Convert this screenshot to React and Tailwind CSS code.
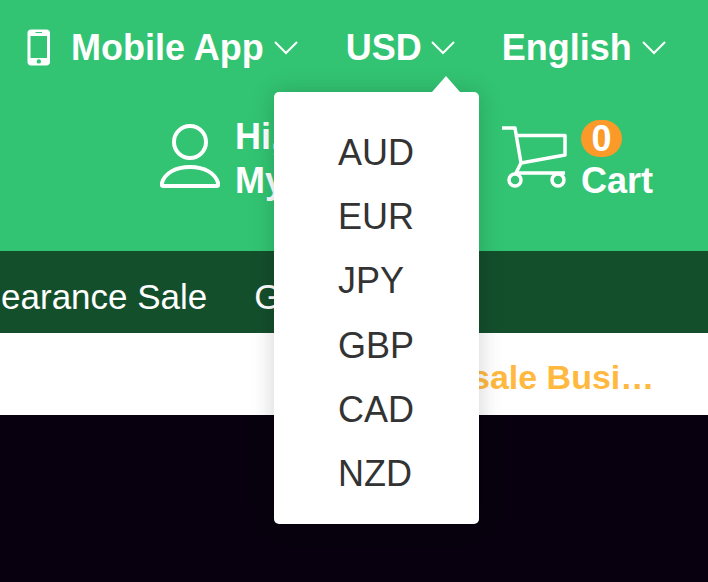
const currencies = ['AUD', 'EUR', 'JPY', 'GBP', 'CAD', 'NZD']

function Chevron() {
  return (
    <svg width="24" height="15" viewBox="0 0 24 15" fill="none" stroke="white" strokeWidth="2">
      <path d="M1 2 L12 13 L23 2" />
    </svg>
  )
}

function PhoneIcon() {
  return (
    <svg width="24" height="37" viewBox="0 0 24 37" fill="white">
      <path
        fillRule="evenodd"
        d="M4 .5h15.500c2 0 3.500 1.500 3.500 3.500v29c0 2-1.500 3.500-3.500 3.500H4c-2 0-3.500-1.500-3.500-3.500V4C.5 2 2 .5 4 .5zM3.500 7v22h16.500V7zM8.500 3h6.500v1H8.500zM11.800 30.200a2.200 2.200 0 1 0 0 4.400 2.200 2.200 0 0 0 0-4.400z"
      />
    </svg>
  )
}

function UserIcon() {
  return (
    <svg width="60" height="64" viewBox="0 0 60 64" fill="none" stroke="white" strokeWidth="4">
      <circle cx="30" cy="18" r="16" />
      <path d="M3 62 h54 c1 0 1.500-.8 1.300-2 C56 49 44 43 30 43 S4 49 1.700 60 C1.500 61.200 2 62 3 62z" strokeLinejoin="round" />
    </svg>
  )
}

function CartIcon() {
  return (
    <svg width="66" height="62" viewBox="0 0 66 62" fill="none" stroke="white" strokeWidth="3.500">
      <path d="M0 2 H13 L19 37 L63 29 V9.500 H15" strokeLinejoin="round" />
      <path d="M19 37 L14 47 H63" strokeLinejoin="round" />
      <circle cx="13" cy="54" r="6" />
      <circle cx="56" cy="54" r="6" />
    </svg>
  )
}

export default function App() {
  return (
    <div className="relative h-[582px] w-[708px] overflow-hidden bg-[#08000e] font-['Liberation_Sans',Arial,sans-serif]">
      <header className="h-[251px] bg-[#32c472] text-white">
        <div className="flex h-[92px] items-center pl-[27px] pt-[3px] text-[36px] leading-none font-bold">
          <PhoneIcon />
          <span className="ml-[20px]">Mobile App</span>
          <span className="ml-[10px] flex"><Chevron /></span>
          <span className="ml-[48px]">USD</span>
          <span className="ml-[9px] flex"><Chevron /></span>
          <span className="ml-[47px]">English</span>
          <span className="ml-[10px] flex"><Chevron /></span>
        </div>

        <div className="flex items-start justify-end pr-[55px] pt-[28px] text-[36px] leading-[44px] font-bold">
          <div className="mr-[15px] mt-[4px]"><UserIcon /></div>
          <div className="-mt-[5px] w-[267px]">
            <div>Hi, Sign in</div>
            <div>My Account</div>
          </div>
          <div className="mr-[13px] mt-[6px]"><CartIcon /></div>
          <div className="flex flex-col items-start">
            <span className="flex h-[37px] w-[41px] items-center justify-center rounded-full bg-[#fb9a28] leading-none">0</span>
            <span className="mt-[2px]">Cart</span>
          </div>
        </div>
      </header>

      <nav className="flex h-[82px] items-center gap-[47px] overflow-hidden whitespace-nowrap bg-[#144f2c] pt-[11px] text-[35px] text-white">
        <span className="-ml-[32px]">Clearance Sale</span>
        <span>Group Buy</span>
      </nav>

      <div className="flex h-[82px] items-center justify-end bg-white pr-[52px] pt-[6px] text-[34px] font-bold text-[#ffb93f]">
        <span className="w-[287px] truncate">Wholesale Business</span>
      </div>

      <div className="absolute left-[274px] top-[92px] h-[432px] w-[205px] rounded-[5px] bg-white py-[29px] pl-[64px] text-[36px] leading-[64.200px] text-[#333] shadow-[0_0_24px_rgba(0,0,0,0.18)]">
        <div className="absolute -top-[16px] left-[158px] h-0 w-0 border-x-[14.500px] border-b-[16px] border-x-transparent border-b-white" />
        {currencies.map((c) => (
          <div key={c}>{c}</div>
        ))}
      </div>
    </div>
  )
}
